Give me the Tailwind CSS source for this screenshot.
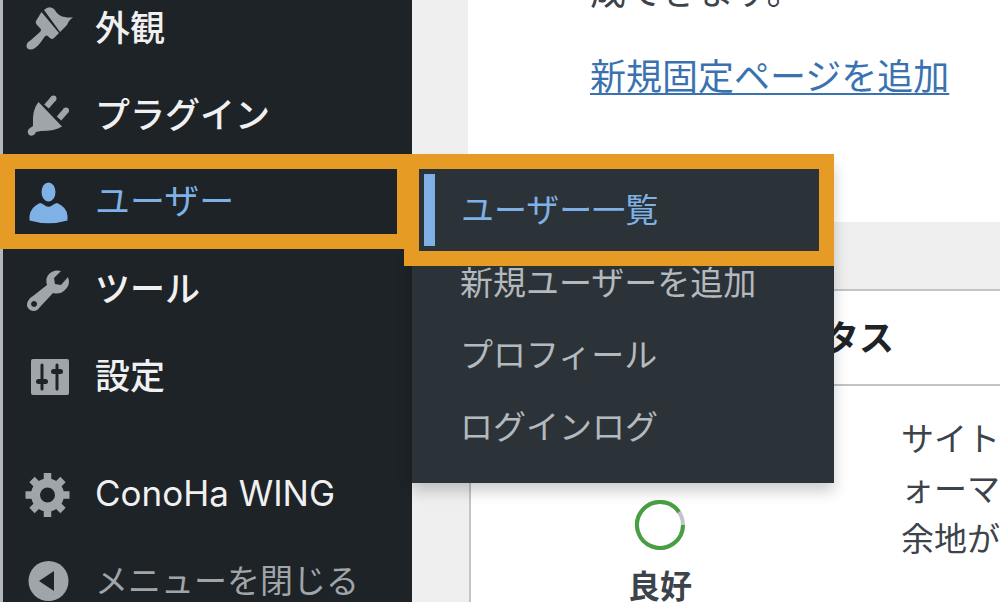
<!DOCTYPE html>
<html lang="ja">
<head>
<meta charset="utf-8">
<meta name="viewport" content="width=device-width, initial-scale=1">
<title>ダッシュボード</title>
<script src="https://cdn.jsdelivr.net/npm/@tailwindcss/browser@4"></script>
</head>
<body class="flex h-screen overflow-hidden bg-[#efeff0] font-['Inter','Noto_Sans_CJK_JP',sans-serif] text-[#3c434a]">

<nav aria-label="メインメニュー" class="relative z-10 w-[412px] shrink-0 border-l-3 border-[#b4b8bb] bg-[#1d2327] text-[35px] font-medium text-[#f0f0f1]">
  <ul class="-mt-4">
    <li>
      <a href="#" class="flex h-[87px] items-center gap-[22px] pl-5">
        <svg class="size-[50px] shrink-0 fill-[#a0a5aa]" viewBox="0 0 50 50" aria-hidden="true"><path d="M21 7q5-5 10-1 5 8 11 8 4 1 8 0-4 3-6 8l-7 7z"/><path d="M18.500 9L36 30l-5 5q-2 2-4 0l-3-2.500q-2 0-3 2-5 8-9 10.500-5 3-8 0-2-5 4-8l9-8q2-2 0-4l-3-3q-2-2-1-4z"/></svg>
        <span class="pt-0.5">外観</span>
      </a>
    </li>
    <li>
      <a href="#" class="flex h-[87px] items-center gap-[22px] pl-5">
        <svg class="size-[50px] shrink-0 fill-[#a0a5aa]" viewBox="0 0 50 50" aria-hidden="true"><path d="M15.500 12L39 36.500Q32 41 18 41l-5 1-1 2q-3 3-6 1-3-4 1-7l3-2Q9 19 15.500 12z"/><path d="M23.500 16.500l7-8M36 28.500l7-8" class="fill-none stroke-[#a0a5aa] stroke-[6]"/><circle cx="30.500" cy="8.500" r="3"/><circle cx="43" cy="20.500" r="3"/></svg>
        <span class="pt-0.5">プラグイン</span>
      </a>
    </li>
    <li class="relative">
      <a href="#" aria-expanded="true" class="flex h-[87px] items-center gap-[22px] pl-5 font-normal text-[#7fb1e6]">
        <svg class="size-[50px] shrink-0 fill-current" viewBox="0 0 50 50" aria-hidden="true"><ellipse cx="25.500" cy="15" rx="7" ry="9.500"/><path d="M17 26q2 0 5 2.500 3.500 2.500 7 0 3-2.500 5-2.500 10 4 10.500 13v4.500q-19 5.500-38 0V39q1-9 10.500-13z"/></svg>
        <span>ユーザー</span>
      </a>
      <span class="pointer-events-none absolute -inset-y-1 right-0 -left-[3px] z-20 border-[15px] border-[#e59b24]"></span>
      <ul class="absolute top-0 left-full w-[422px] bg-[#2c3338] pt-4 pb-[21px] text-[33px] font-normal text-[#b4b9be] shadow-[0_8px_14px_rgba(0,0,0,0.2)]">
        <li class="relative z-20">
          <a href="#" aria-current="page" class="ml-3 flex h-[72px] items-center border-l-11 border-[#7fb1e6] pt-0.5 pl-[26px] text-[#7fb1e6]">ユーザー一覧</a>
          <span class="pointer-events-none absolute -inset-y-5 right-0 -left-2 border-[15px] border-[#e59b24]"></span>
        </li>
        <li><a href="#" class="flex h-[72px] items-center pt-1 pl-12">新規ユーザーを追加</a></li>
        <li><a href="#" class="flex h-[72px] items-center pt-1 pl-12">プロフィール</a></li>
        <li><a href="#" class="flex h-[72px] items-center pt-1 pl-12">ログインログ</a></li>
      </ul>
    </li>
    <li>
      <a href="#" class="flex h-[87px] items-center gap-[22px] pl-5">
        <svg class="size-[50px] shrink-0 fill-[#a0a5aa]" viewBox="0 0 50 50" aria-hidden="true"><path fill-rule="evenodd" d="M38 7l-7 7 1 6 6 1 7-8q3 8-3 13-5 5-12 3L17 43q-4 6-10 3-5-4-2-9 1-3 5-5l14-11q-2-7 2-11 5-5 12-3zM11 37a3 3 0 1 0 .1 0z"/></svg>
        <span class="pt-0.5">ツール</span>
      </a>
    </li>
    <li>
      <a href="#" class="flex h-[87px] items-center gap-[22px] pl-5">
        <svg class="size-[50px] shrink-0 fill-[#a0a5aa]" viewBox="0 0 50 50" aria-hidden="true"><rect x="8" y="8" width="38" height="36" rx="2"/><path d="M19 14v24M34 14v24" class="stroke-[#1d2327] stroke-[3]" stroke-linecap="round"/><rect x="13" y="28" width="12" height="5" rx="2.500" class="fill-[#1d2327]"/><rect x="28" y="18" width="12" height="5" rx="2.500" class="fill-[#1d2327]"/></svg>
        <span class="pt-0.5">設定</span>
      </a>
    </li>
    <li class="mt-[31px]">
      <a href="#" class="flex h-[87px] items-center gap-[22px] pl-5">
        <svg class="size-[50px] shrink-0 fill-none stroke-[#a0a5aa]" viewBox="0 0 50 50" aria-hidden="true"><circle cx="24.500" cy="26" r="12" stroke-width="9"/><path d="M24.500 4v7M24.500 41v7M2.500 26h7M39.500 26h7M9 10.500l5 5M35 36.500l5 5M40 10.500l-5 5M14 36.500l-5 5" stroke-width="7.500"/></svg>
        <span class="font-normal">ConoHa WING</span>
      </a>
    </li>
    <li>
      <button type="button" class="flex h-[87px] w-full items-center gap-[22px] pl-5 text-left text-[33px] font-normal text-[#a0a5aa]">
        <svg class="size-[50px] shrink-0 fill-[#a0a5aa]" viewBox="0 0 50 50" aria-hidden="true"><circle cx="25.500" cy="25" r="20"/><path d="M31 15v20L16 25z" class="fill-[#1d2327]"/></svg>
        <span class="pt-0.5">メニューを閉じる</span>
      </button>
    </li>
  </ul>
</nav>

<main class="min-w-0 flex-1 pl-14">
  <section class="h-[222px] overflow-hidden bg-white pl-[122px] text-[36px] leading-[50px]">
    <p class="-mt-[33px] whitespace-nowrap">成できます。</p>
    <a href="#" class="mt-[35px] block w-fit whitespace-nowrap text-[#3a72b0] underline decoration-2 underline-offset-3">新規固定ページを追加</a>
  </section>

  <section class="mt-[67px] ml-px border-t-2 border-l-2 border-[#c3c4c7] bg-white">
    <h2 class="flex h-[95px] items-center border-b-2 border-[#c3c4c7] pt-0.5 pl-[38px] text-[35px] font-bold whitespace-nowrap text-[#1d2327]">サイトヘルスステータス</h2>
    <div class="flex h-[300px] pt-7">
      <div class="flex w-[378px] shrink-0 flex-col items-center pt-[86px]">
        <svg class="size-[50px] fill-none stroke-[4]" viewBox="0 0 50 50" aria-hidden="true"><circle cx="25" cy="25" r="23" class="stroke-[#c3c4c7]"/><path d="M48 25A23 23 0 1 1 44 12" class="stroke-[#46a040]"/></svg>
        <p class="mt-3 text-[32px] leading-[50px] font-bold">良好</p>
      </div>
      <p class="pl-[52px] text-[33px] leading-[50px] whitespace-nowrap">サイトのパフ<br>ォーマンスには<br>余地があります</p>
    </div>
  </section>
</main>
</body>
</html>
